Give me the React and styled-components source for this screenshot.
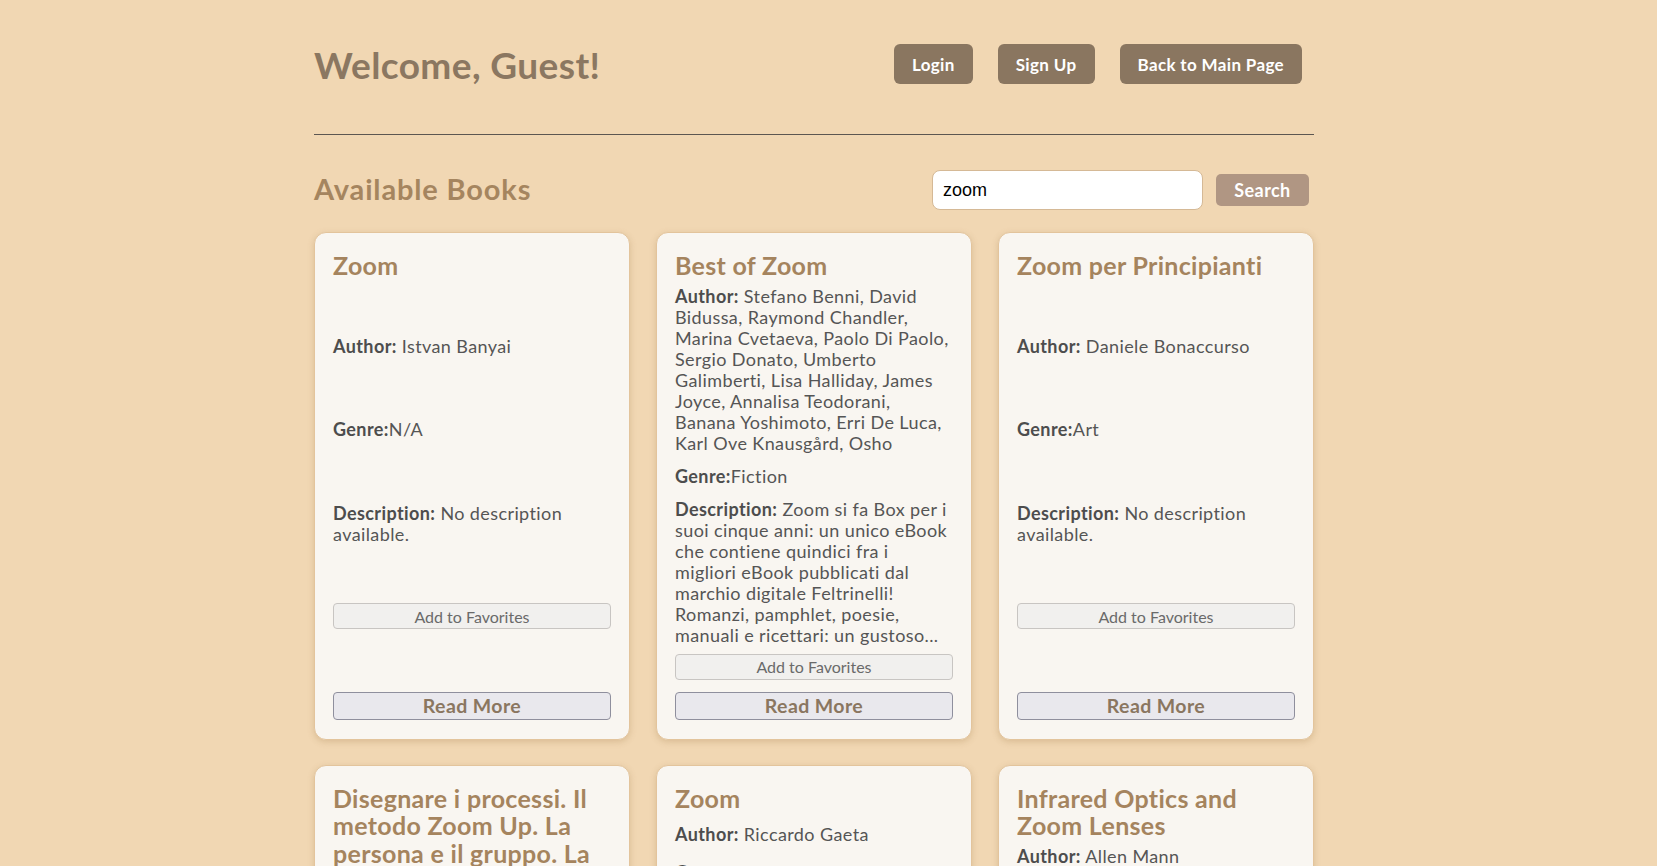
import React, { useState } from "react";
import styled, { createGlobalStyle } from "styled-components";

const FONT = `"Trebuchet MS", Lato, "Liberation Sans", sans-serif`;

// Global styles for the page
const GlobalStyle = createGlobalStyle`
  * {
    box-sizing: border-box;
  }
  body {
    margin: 0;
    background-color: #f1d7b3;
    font-family: ${FONT};
    color: #4f4f4f;
  }
`;

const books = [
  {
    title: "Zoom",
    author: "Istvan Banyai",
    genre: "N/A",
    description: "No description available.",
  },
  {
    title: "Best of Zoom",
    author:
      "Stefano Benni, David Bidussa, Raymond Chandler, Marina Cvetaeva, Paolo Di Paolo, Sergio Donato, Umberto Galimberti, Lisa Halliday, James Joyce, Annalisa Teodorani, Banana Yoshimoto, Erri De Luca, Karl Ove Knausgård, Osho",
    genre: "Fiction",
    description:
      "Zoom si fa Box per i suoi cinque anni: un unico eBook che contiene quindici fra i migliori eBook pubblicati dal marchio digitale Feltrinelli! Romanzi, pamphlet, poesie, manuali e ricettari: un gustoso...",
  },
  {
    title: "Zoom per Principianti",
    author: "Daniele Bonaccurso",
    genre: "Art",
    description: "No description available.",
  },
  {
    title: "Disegnare i processi. Il metodo Zoom Up. La persona e il gruppo. La formazione",
    author: "Marco Gatti",
    genre: "N/A",
    description: "No description available.",
  },
  {
    title: "Zoom",
    author: "Riccardo Gaeta",
    genre: "Fiction",
    description:
      "Un romanzo che segue le vite di tre amici attraverso gli anni, tra sogni, fallimenti e nuove partenze, raccontando con ironia e tenerezza il passaggio all'età adulta e il peso delle scelte che ci...",
  },
  {
    title: "Infrared Optics and Zoom Lenses",
    author: "Allen Mann",
    genre: "Technology & Engineering",
    description:
      "Covers the design of infrared zoom lenses, from first-order optics and mechanical compensation to aberration control, materials and athermalization, with many worked examples for thermal imaging...",
  },
];

const App = () => {
  const [query, setQuery] = useState("zoom");

  return (
    <>
      <GlobalStyle />
      <Page>
        <Container>
          <Header>
            <Welcome>Welcome, Guest!</Welcome>
            <Nav>
              <NavButton>Login</NavButton>
              <NavButton>Sign Up</NavButton>
              <NavButton>Back to Main Page</NavButton>
            </Nav>
          </Header>
          <Divider />
          <SectionHead>
            <SectionTitle>Available Books</SectionTitle>
            <SearchForm onSubmit={(e) => e.preventDefault()}>
              <SearchInput
                type="text"
                value={query}
                onChange={(e) => setQuery(e.target.value)}
              />
              <SearchButton type="submit">Search</SearchButton>
            </SearchForm>
          </SectionHead>
          <Grid>
            {books.map((book, i) => (
              <BookCard key={i} book={book} />
            ))}
          </Grid>
        </Container>
      </Page>
    </>
  );
};

export default App;

// One book in the grid
const BookCard = ({ book }) => (
  <Card>
    <CardTitle>{book.title}</CardTitle>
    <Info>
      <b>Author:</b> {book.author}
    </Info>
    <Info>
      <b>Genre:</b>
      {book.genre}
    </Info>
    <Info $clamp>
      <b>Description:</b> {book.description}
    </Info>
    <FavButton>Add to Favorites</FavButton>
    <ReadMore>Read More</ReadMore>
  </Card>
);

// Styled Components
const Page = styled.div`
  display: flex;
  justify-content: center;
  padding: 24px 29px 40px 0;
`;

const Container = styled.div`
  width: 1000px;
`;

const Header = styled.header`
  display: flex;
  justify-content: space-between;
  align-items: center;
  height: 80px;
  margin-bottom: 30px;
`;

const Welcome = styled.h1`
  margin: 0;
  font-size: 37px;
  letter-spacing: 0.4px;
  font-weight: 700;
  color: #8b7761;
`;

const Nav = styled.nav`
  display: flex;
  gap: 25px;
  padding-right: 12px;
`;

const NavButton = styled.button`
  height: 40px;
  padding: 0 18px;
  border: none;
  border-radius: 6px;
  background-color: #8a7660;
  color: #fff;
  font-family: ${FONT};
  font-size: 17px;
  letter-spacing: 0.35px;
  font-weight: 700;
`;

const Divider = styled.hr`
  margin: 0;
  border: none;
  border-top: 1px solid #5c5651;
`;

const SectionHead = styled.section`
  display: flex;
  justify-content: space-between;
  align-items: center;
  height: 50px;
  margin: 30px 0 17px;
`;

const SectionTitle = styled.h2`
  margin: 0 0 4px;
  font-size: 29px;
  letter-spacing: 0.85px;
  font-weight: 700;
  color: #a5855f;
`;

const SearchForm = styled.form`
  display: flex;
  align-items: center;
  gap: 13px;
  padding-right: 5px;
`;

const SearchInput = styled.input`
  width: 271px;
  height: 40px;
  padding: 0 10px;
  border: 1px solid #d5b996;
  border-radius: 8px;
  background: #fff;
  font-family: Arial, "Liberation Sans", sans-serif;
  font-size: 18px;
  color: #000;
  outline: none;
`;

const SearchButton = styled.button`
  width: 93px;
  height: 32px;
  border: none;
  border-radius: 5px;
  background-color: #b09683;
  color: #fff;
  font-family: ${FONT};
  font-size: 18px;
  letter-spacing: 0.4px;
  font-weight: 700;
`;

const Grid = styled.div`
  display: grid;
  grid-template-columns: repeat(3, 1fr);
  column-gap: 26px;
  row-gap: 25px;
`;

const Card = styled.article`
  display: flex;
  flex-direction: column;
  justify-content: space-between;
  padding: 19px 18px;
  border: 1px solid #e3c49c;
  border-radius: 12px;
  background-color: #f9f6f1;
  box-shadow: 0 2px 6px rgba(150, 110, 60, 0.25);
`;

const CardTitle = styled.h3`
  margin: 0;
  font-size: 25px;
  line-height: 27.6px;
  letter-spacing: 0.3px;
  font-weight: 700;
  color: #a5845e;
`;

const Info = styled.p`
  margin: 6px 0;
  font-size: 18px;
  line-height: 21px;
  letter-spacing: 0.4px;
  color: #555;

  b {
    color: #4d4d4d;
  }

  ${(p) =>
    p.$clamp &&
    `
    display: -webkit-box;
    -webkit-line-clamp: 7;
    -webkit-box-orient: vertical;
    overflow: hidden;
  `}
`;

const FavButton = styled.button`
  height: 26px;
  margin-top: 2px;
  border: 1px solid #c8c5c2;
  border-radius: 4px;
  background-color: #f1f0ee;
  color: #6a6a6a;
  font-family: Lato, "Open Sans", sans-serif;
  font-size: 16px;
`;

const ReadMore = styled.button`
  height: 28px;
  margin-top: 12px;
  border: 1px solid #8f8f9d;
  border-radius: 4px;
  background-color: #e9e8ed;
  color: #8a7660;
  font-family: ${FONT};
  font-size: 19.5px;
  letter-spacing: 0.4px;
  font-weight: 700;
`;
